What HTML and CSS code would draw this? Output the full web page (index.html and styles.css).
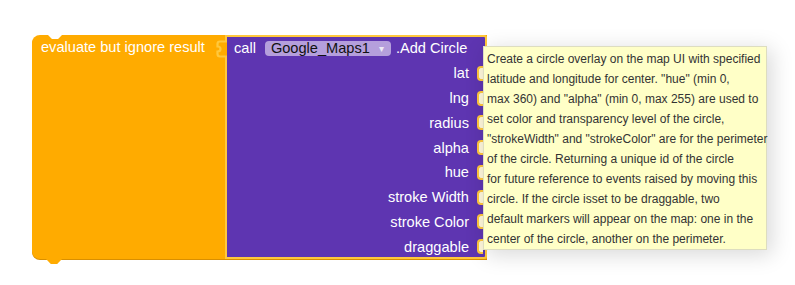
FILE: index.html
```html
<!DOCTYPE html>
<html>
<head>
<meta charset="utf-8">
<link rel="stylesheet" href="styles.css">
</head>
<body>
<div class="canvas">
  <div class="eval-block">
    <span class="eval-label">evaluate but ignore result</span>
    <div class="call-block">
      <svg class="out-tab" width="12" height="18" viewBox="0 0 12 18"><path d="M11,1.5 H4 Q1.5,1.5 1.5,4 V6.5 Q4.5,6.5 4.5,9 Q4.5,11.5 1.5,11.5 V14 Q1.5,16.5 4,16.5 H11" fill="#FFAB00" stroke="#FFC83D" stroke-width="2.2"/></svg>
      <div class="call-head">
        <span class="call-word">call</span>
        <span class="dropdown">Google_Maps1<span class="caret">▾</span></span>
        <span class="method">.Add Circle</span>
      </div>
      <div class="arg"><span>lat</span><i class="socket"></i></div>
      <div class="arg"><span>lng</span><i class="socket"></i></div>
      <div class="arg"><span>radius</span><i class="socket"></i></div>
      <div class="arg"><span>alpha</span><i class="socket"></i></div>
      <div class="arg"><span>hue</span><i class="socket"></i></div>
      <div class="arg"><span>stroke Width</span><i class="socket"></i></div>
      <div class="arg"><span>stroke Color</span><i class="socket"></i></div>
      <div class="arg"><span>draggable</span><i class="socket"></i></div>
    </div>
  </div>
  <div class="tooltip">Create a circle overlay on the map UI with specified<br>latitude and longitude for center. "hue" (min 0,<br>max 360) and "alpha" (min 0, max 255) are used to<br>set color and transparency level of the circle,<br>"strokeWidth" and "strokeColor" are for the perimeter<br>of the circle. Returning a unique id of the circle<br>for future reference to events raised by moving this<br>circle. If the circle isset to be draggable, two<br>default markers will appear on the map: one in the<br>center of the circle, another on the perimeter.</div>
</div>
</body>
</html>
```
FILE: styles.css
```css
html, body {
  margin: 0;
  padding: 0;
  background: #ffffff;
}
.canvas {
  position: relative;
  width: 795px;
  height: 285px;
  padding: 35px 0 0 32px;
  box-sizing: border-box;
  font-family: "Liberation Sans", Arial, sans-serif;
}
.eval-block {
  position: relative;
  display: flex;
  width: 455px;
  background: #FFAB00;
  border-radius: 8px 0 0 8px;
  box-shadow: 0 1px 0 #D98F00;
}
.eval-block::before {
  content: "";
  position: absolute;
  left: 16px;
  top: 0;
  width: 14px;
  height: 4px;
  background: #ffffff;
  clip-path: polygon(0 0, 100% 0, 72% 100%, 28% 100%);
}
.eval-block::after {
  content: "";
  position: absolute;
  left: 14px;
  bottom: -5px;
  width: 16px;
  height: 5px;
  background: #FFAB00;
  clip-path: polygon(0 0, 100% 0, 70% 100%, 30% 100%);
}
.eval-label {
  width: 193px;
  flex: none;
  color: #ffffff;
  font-size: 14.6px;
  padding: 3px 0 0 9px;
  box-sizing: border-box;
  line-height: 18px;
}
.call-block {
  position: relative;
  width: 262px;
  background: #5E35B1;
  border: 2px solid #FFC83D;
  border-radius: 0 3px 3px 0;
  box-sizing: border-box;
  color: #ffffff;
  font-size: 14.6px;
}
.out-tab {
  position: absolute;
  left: -11px;
  top: 3px;
}
.call-head {
  display: flex;
  align-items: center;
  height: 22px;
  padding-left: 7px;
}
.call-word {
  margin-right: 9px;
}
.dropdown {
  display: flex;
  align-items: center;
  height: 15px;
  padding: 0 6px 0 6px;
  background: #B59FDC;
  border-radius: 4px;
  color: #111111;
  font-size: 14.6px;
  width: 126px;
  box-sizing: border-box;
}
.caret {
  margin-left: auto;
  margin-right: 1px;
  color: #eeeaf5;
  font-size: 10px;
}
.method {
  margin-left: 5px;
}
.arg {
  display: flex;
  align-items: center;
  justify-content: flex-end;
  height: 24.75px;
  box-sizing: border-box;
  padding: 4px 2px 0 0;
}
.socket {
  display: block;
  width: 4px;
  height: 11px;
  margin-left: 8px;
  border: 2px solid #FFC83D;
  border-right: none;
  border-radius: 4px 0 0 4px;
  background: #FFF8DC;
}
.tooltip {
  position: absolute;
  left: 483px;
  top: 46px;
  width: 284px;
  height: 204px;
  box-sizing: border-box;
  padding: 2px 3px;
  background: #FFFFC7;
  border: 1px solid #DDDDC0;
  box-shadow: 4px 4px 20px 1px rgba(0, 0, 0, 0.15);
  color: #333333;
  font-size: 12px;
  line-height: 20px;
  white-space: nowrap;
}
```
